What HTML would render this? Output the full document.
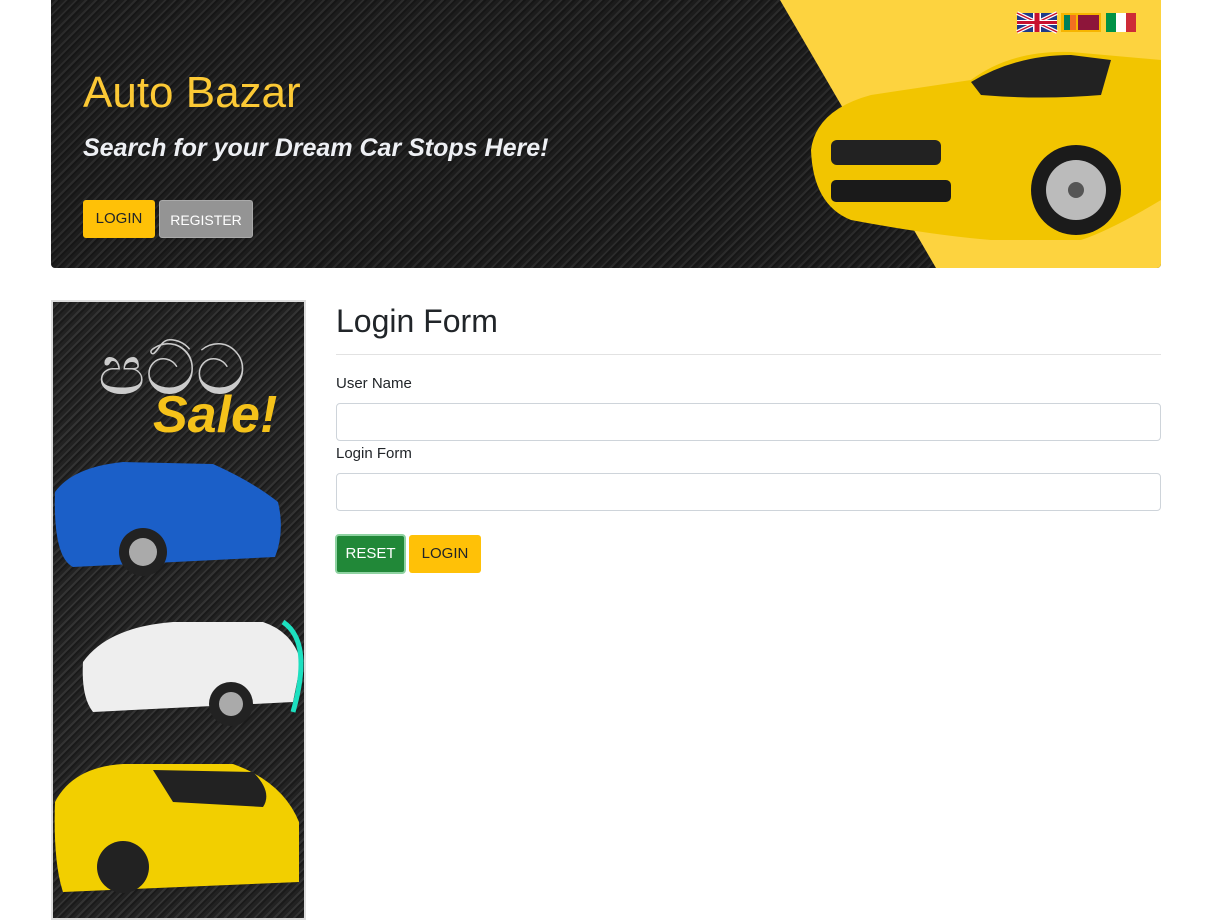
<!DOCTYPE html>
<html><head><meta charset="utf-8"><style>
*{box-sizing:border-box;margin:0;padding:0}
body{width:1212px;height:893px;overflow:hidden;background:#fff;font-family:"Liberation Sans",sans-serif;color:#212529;position:relative}
.hdr{position:absolute;left:51px;top:0;width:1110px;height:268px;border-radius:0 0 4px 4px;overflow:hidden;
background:repeating-linear-gradient(135deg,#1c1c1c 0 3px,#2b2b2b 3px 5px,#161616 5px 7px),#1e1e1e}
.yel{position:absolute;left:0;top:0}
h1.t{position:absolute;left:32px;top:68px;font-size:44px;font-weight:normal;color:#fcc935}
.sub{position:absolute;left:32px;top:134px;font-size:25px;font-weight:bold;font-style:italic;color:#eef0f4}
.btn{position:absolute;height:38px;line-height:38px;font-size:15px;text-align:center;border-radius:3px}
.side{position:absolute;left:51px;top:300px;width:255px;height:620px;border:2px solid #ddd;
background:repeating-linear-gradient(135deg,#222 0 3px,#333 3px 5px,#1a1a1a 5px 7px)}
h2{position:absolute;left:336px;top:303px;font-size:32px;font-weight:normal;color:#212529}
.hr{position:absolute;left:336px;top:354px;width:825px;height:1px;background:#e2e2e2}
.lbl{position:absolute;left:336px;font-size:15px}
.inp{position:absolute;left:336px;width:825px;height:38px;border:1px solid #ced4da;border-radius:4px}
</style></head><body>
<div class="hdr">
<svg class="yel" width="1110" height="268"><polygon points="729,0 1110,0 1110,268 885,268" fill="#fdd33f"/>
<g transform="translate(760,40)">
<path d="M0,110 Q5,70 60,55 L160,40 Q200,10 260,12 L350,20 L350,160 Q300,190 270,200 L180,200 Q120,195 40,180 Q2,165 0,110Z" fill="#f2c500"/>
<path d="M160,42 Q205,15 260,15 L300,20 L290,55 Q230,60 170,55Z" fill="#222"/>
<rect x="20" y="100" width="110" height="25" rx="6" fill="#222"/>
<rect x="20" y="140" width="120" height="22" rx="5" fill="#1a1a1a"/>
<circle cx="265" cy="150" r="45" fill="#1b1b1b"/><circle cx="265" cy="150" r="30" fill="#bbb"/><circle cx="265" cy="150" r="8" fill="#555"/>
</g>
<g transform="translate(966,13)"><rect width="40" height="19" fill="#1f3a8a"/><path d="M0,0L40,19M40,0L0,19" stroke="#fff" stroke-width="4"/><path d="M0,0L40,19M40,0L0,19" stroke="#c8102e" stroke-width="1.5"/><rect x="16" width="8" height="19" fill="#fff"/><rect y="7" width="40" height="5" fill="#fff"/><rect x="17.5" width="5" height="19" fill="#c8102e"/><rect y="8" width="40" height="3" fill="#c8102e"/></g>
<g transform="translate(1010,13)"><rect width="40" height="19" fill="#f7b500"/><rect x="3" y="2" width="6" height="15" fill="#00805a"/><rect x="9" y="2" width="6" height="15" fill="#f36f21"/><rect x="17" y="2" width="21" height="15" fill="#8d153a"/></g>
<g transform="translate(1055,13)"><rect width="10" height="19" fill="#009246"/><rect x="10" width="10" height="19" fill="#fff"/><rect x="20" width="10" height="19" fill="#ce2b37"/></g>
</svg>
<h1 class="t">Auto Bazar</h1>
<div class="sub">Search for your Dream Car Stops Here!</div>
<div class="btn" style="left:32px;top:200px;width:72px;background:#ffc107;color:#212529">LOGIN</div>
<div class="btn" style="left:108px;top:200px;width:94px;font-size:14px;background:#949494;color:#fff;border:1px solid #aaa">REGISTER</div>
</div>
<div class="side">
<svg width="251" height="616">
<text x="45" y="92" font-size="70" fill="#ccc" font-family="Noto Sans CJK SC,sans-serif">පට්ට</text>
<text x="100" y="130" font-size="52" font-weight="bold" font-style="italic" fill="#f5c21a" font-family="Liberation Sans">Sale!</text>
<path d="M2,190 Q20,165 70,160 L160,162 Q200,180 225,200 Q232,230 222,255 L20,265 Q0,255 2,190Z" fill="#1b5fc8"/>
<circle cx="90" cy="250" r="24" fill="#222"/><circle cx="90" cy="250" r="14" fill="#aaa"/>
<path d="M30,360 Q55,325 120,320 L210,320 Q240,330 248,360 L240,400 L40,410 Q28,395 30,360Z" fill="#eee"/>
<circle cx="178" cy="402" r="22" fill="#222"/><circle cx="178" cy="402" r="12" fill="#aaa"/>
<path d="M230,320 Q260,340 240,410" stroke="#1de0c0" stroke-width="5" fill="none"/>
<path d="M2,500 Q20,465 70,462 L180,462 Q230,480 246,520 L246,580 L10,590 Q0,560 2,500Z" fill="#f2cf00"/>
<path d="M100,468 L200,470 Q220,490 210,505 L120,500Z" fill="#222"/>
<circle cx="70" cy="565" r="26" fill="#222"/>
</svg>
</div>
<h2>Login Form</h2>
<div class="hr"></div>
<div class="lbl" style="top:375px">User Name</div>
<div class="inp" style="top:403px"></div>
<div class="lbl" style="top:445px">Login Form</div>
<div class="inp" style="top:473px"></div>
<div class="btn" style="left:335px;top:534px;width:71px;height:40px;line-height:36px;background:#218838;color:#fff;border:2px solid #8fd3a2;border-radius:4px">RESET</div>
<div class="btn" style="left:409px;top:535px;width:72px;background:#ffc107;color:#212529">LOGIN</div>
</body></html>
